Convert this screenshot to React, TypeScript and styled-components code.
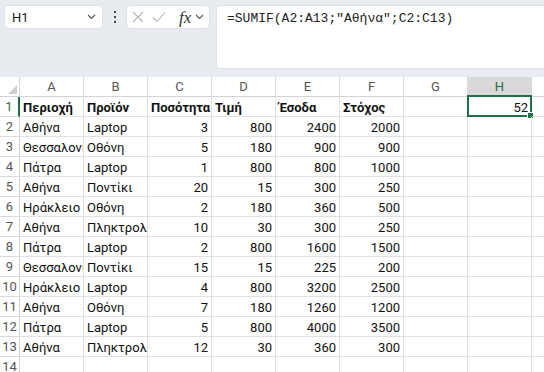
import React from "react";
import styled, { createGlobalStyle } from "styled-components";

const GlobalStyle = createGlobalStyle`
  html, body {
    margin: 0;
    padding: 0;
    background: #ffffff;
  }
  body {
    font-family: Roboto, "Noto Sans", sans-serif;
  }
`;

const Page = styled.div`
  width: 544px;
  height: 372px;
  overflow: hidden;
  background: #ffffff;
`;

const Toolbar = styled.div`
  height: 77px;
  box-sizing: border-box;
  background: #e8ebf0;
  display: flex;
  align-items: flex-start;
  padding: 5px 0 0 4px;
`;

const NameBox = styled.div`
  width: 99px;
  height: 24px;
  box-sizing: border-box;
  background: #ffffff;
  border-radius: 4px;
  border: 1px solid #dfe2e6;
  display: flex;
  align-items: center;
  justify-content: space-between;
  padding: 0 6px 0 7px;
  font-size: 13px;
  color: #222;
`;

const Kebab = styled.div`
  width: 23px;
  height: 24px;
  display: flex;
  flex-direction: column;
  align-items: center;
  justify-content: center;
  gap: 3px;

  span {
    width: 2px;
    height: 2px;
    background: #444;
  }
`;

const FuncBox = styled.div`
  width: 84px;
  height: 24px;
  box-sizing: border-box;
  background: #ffffff;
  border-radius: 4px;
  border: 1px solid #dfe2e6;
  display: flex;
  align-items: center;
  padding: 0 4px 0 5px;
  gap: 8px;
`;

const Fx = styled.span`
  font-family: "Liberation Serif", serif;
  font-style: italic;
  font-size: 17px;
  color: #333;
  margin-left: 5px;
  margin-right: -4px;
  line-height: 1;
`;

const FormulaBox = styled.div`
  flex: 1;
  height: 64px;
  margin-left: 6px;
  box-sizing: border-box;
  background: #ffffff;
  border: 1px solid #dfe2e6;
  border-right: none;
  border-radius: 4px 0 0 4px;
  padding: 5px 0 0 10px;
  font-family: "Liberation Mono", monospace;
  font-size: 13px;
  color: #222;
  white-space: nowrap;
`;

const Sheet = styled.div`
  display: grid;
  grid-template-columns: 20px repeat(9, 64px);
  grid-auto-rows: 20px;
`;

const Corner = styled.div`
  border-right: 1px solid #d4d4d4;
  border-bottom: 1px solid #d4d4d4;
  display: flex;
  align-items: flex-end;
  justify-content: flex-end;
  padding: 0 2px 2px 0;
`;

const ColHead = styled.div<{ $active?: boolean }>`
  box-sizing: border-box;
  background: ${(p) => (p.$active ? "#d9d9d9" : "#ffffff")};
  color: ${(p) => (p.$active ? "#1e6f43" : "#555")};
  border-right: 1px solid #dadada;
  border-bottom: ${(p) => (p.$active ? "2px solid #1e7145" : "1px solid #d4d4d4")};
  font-size: 13px;
  display: flex;
  align-items: center;
  justify-content: center;
`;

const RowHead = styled.div<{ $active?: boolean }>`
  box-sizing: border-box;
  color: ${(p) => (p.$active ? "#1e7145" : "#555")};
  border-right: ${(p) => (p.$active ? "2px solid #1e7145" : "1px solid #d4d4d4")};
  border-bottom: 1px solid #dadada;
  font-size: 13px;
  display: flex;
  align-items: center;
  justify-content: center;
`;

const Cell = styled.div<{ $num?: boolean; $bold?: boolean }>`
  position: relative;
  box-sizing: border-box;
  border-right: 1px solid #e1e1e1;
  border-bottom: 1px solid #e1e1e1;
  padding: 1px 3px 0 3px;
  font-size: 13px;
  line-height: 19px;
  color: #111;
  font-weight: ${(p) => (p.$bold ? 700 : 400)};
  text-align: ${(p) => (p.$num ? "right" : "left")};
  white-space: nowrap;
  overflow: ${(p) => (p.$num ? "visible" : "hidden")};
`;

const Selection = styled.div`
  position: absolute;
  left: -1px;
  top: -2px;
  right: -1px;
  bottom: -1px;
  border: 2px solid #1e7145;
  pointer-events: none;
`;

const Handle = styled.div`
  position: absolute;
  right: -4px;
  bottom: -4px;
  width: 5px;
  height: 5px;
  background: #1e7145;
  border: 1px solid #ffffff;
`;

const Chevron = () => (
  <svg width="9" height="6" viewBox="0 0 9 6">
    <path d="M1 1 L4.5 4.5 L8 1" fill="none" stroke="#555" strokeWidth="1.1" />
  </svg>
);

const columns = ["A", "B", "C", "D", "E", "F", "G", "H", ""];

const rows: (string | number | null)[][] = [
  ["Περιοχή", "Προϊόν", "Ποσότητα", "Τιμή", "Έσοδα", "Στόχος", null, 52],
  ["Αθήνα", "Laptop", 3, 800, 2400, 2000],
  ["Θεσσαλονίκη", "Οθόνη", 5, 180, 900, 900],
  ["Πάτρα", "Laptop", 1, 800, 800, 1000],
  ["Αθήνα", "Ποντίκι", 20, 15, 300, 250],
  ["Ηράκλειο", "Οθόνη", 2, 180, 360, 500],
  ["Αθήνα", "Πληκτρολόγιο", 10, 30, 300, 250],
  ["Πάτρα", "Laptop", 2, 800, 1600, 1500],
  ["Θεσσαλονίκη", "Ποντίκι", 15, 15, 225, 200],
  ["Ηράκλειο", "Laptop", 4, 800, 3200, 2500],
  ["Αθήνα", "Οθόνη", 7, 180, 1260, 1200],
  ["Πάτρα", "Laptop", 5, 800, 4000, 3500],
  ["Αθήνα", "Πληκτρολόγιο", 12, 30, 360, 300],
  [],
];

export default function App() {
  return (
    <Page>
      <GlobalStyle />
      <Toolbar>
        <NameBox>
          <span>H1</span>
          <Chevron />
        </NameBox>
        <Kebab>
          <span />
          <span />
          <span />
        </Kebab>
        <FuncBox>
          <svg width="12" height="12" viewBox="0 0 12 12">
            <path d="M1 1 L11 11 M11 1 L1 11" stroke="#b4b4b4" strokeWidth="1.1" />
          </svg>
          <svg width="14" height="12" viewBox="0 0 14 12">
            <path d="M1 6.5 L5 10.5 L13 1.5" fill="none" stroke="#b4b4b4" strokeWidth="1.1" />
          </svg>
          <Fx>fx</Fx>
          <Chevron />
        </FuncBox>
        <FormulaBox>=SUMIF(A2:A13;"Αθήνα";C2:C13)</FormulaBox>
      </Toolbar>

      <Sheet>
        <Corner>
          <svg width="9" height="9" viewBox="0 0 9 9">
            <path d="M9 0 L9 9 L0 9 Z" fill="#cfcfcf" />
          </svg>
        </Corner>
        {columns.map((c, i) => (
          <ColHead key={i} $active={c === "H"}>
            {c}
          </ColHead>
        ))}
        {rows.map((row, r) => (
          <React.Fragment key={r}>
            <RowHead $active={r === 0}>{r + 1}</RowHead>
            {columns.map((_, c) => {
              const v = row[c];
              const isNum = typeof v === "number";
              return (
                <Cell key={c} $num={isNum} $bold={r === 0 && !isNum}>
                  {v ?? ""}
                  {r === 0 && c === 7 && (
                    <Selection>
                      <Handle />
                    </Selection>
                  )}
                </Cell>
              );
            })}
          </React.Fragment>
        ))}
      </Sheet>
    </Page>
  );
}
